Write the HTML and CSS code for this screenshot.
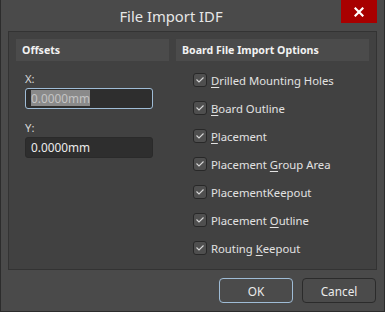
FILE: index.html
```html
<!DOCTYPE html>
<html lang="en">
<head>
  <meta charset="UTF-8">
  <title>File Import IDF</title>
  <link rel="stylesheet" href="styles.css">
</head>
<body>
  <div class="dialog">
    <div class="title-bar">
      <div class="title">File Import IDF</div>
      <button class="close-btn">
        <svg width="10" height="10" viewBox="0 0 10 10"><path d="M1.5 1.5 L8.5 8.5 M8.5 1.5 L1.5 8.5" stroke="#fff" stroke-width="2.2" stroke-linecap="square"/></svg>
      </button>
    </div>

    <div class="panel">
      <div class="group offsets">
        <div class="group-head">Offsets</div>
        <label class="field-label">X:</label>
        <div class="field focus"><span class="sel">0.0000mm</span></div>
        <label class="field-label">Y:</label>
        <div class="field">0.0000mm</div>
      </div>

      <div class="group options">
        <div class="group-head">Board File Import Options</div>
        <ul class="check-list" id="check-list"></ul>
      </div>
    </div>

    <div class="btn-row">
      <button class="btn primary">OK</button>
      <button class="btn">Cancel</button>
    </div>
  </div>

  <script>
    // 옵션 목록 (밑줄 글자 = 단축키)
    const options = [
      ["", "D", "rilled Mounting Holes"],
      ["", "B", "oard Outline"],
      ["", "P", "lacement"],
      ["Placement ", "G", "roup Area"],
      ["PlacementKeepout", "", ""],
      ["Placement ", "O", "utline"],
      ["Routing ", "K", "eepout"]
    ];
    const tick = '<svg width="14" height="14" viewBox="0 0 14 14"><path d="M3.5 6.5 L6 9 L10.5 4.5" fill="none" stroke="#d8d8d8" stroke-width="1.1"/></svg>';
    const list = document.getElementById('check-list');
    options.forEach(([pre, key, post]) => {
      const li = document.createElement('li');
      li.className = 'check-item';
      li.innerHTML = '<span class="box">' + tick + '</span><span class="check-text">' +
        pre + (key ? '<u>' + key + '</u>' : '') + post + '</span>';
      list.appendChild(li);
    });
  </script>
</body>
</html>
```

FILE: styles.css
```css
html, body {
  margin: 0; padding: 0;
  background: #4a4a4a;
  font-family: 'Noto Sans', 'Open Sans', sans-serif;
  overflow: hidden;
}
.dialog {
  width: 385px; height: 312px;
  box-sizing: border-box;
  background: #4a4a4a;
  border: 1px solid #2c2c2c;
  border-top: none;
  display: flex;
  flex-direction: column;
}
.title-bar {
  height: 31px;
  display: flex;
  align-items: flex-start;
}
.title {
  flex: 1;
  text-align: center;
  color: #e6e6e6;
  font-size: 14.8px;
  line-height: 32px;
}
.close-btn {
  width: 36px; height: 23px;
  margin-right: 7px;
  border: none;
  background: #a80000;
  padding: 0;
  display: flex;
  align-items: center;
  justify-content: center;
}
.panel {
  margin: 0 7px;
  height: 239px;
  box-sizing: border-box;
  border: 1px solid #333;
  background: #414141;
  padding: 7px 7px 0 7px;
  display: flex;
  gap: 7px;
}
.group-head {
  height: 22px;
  line-height: 22px;
  background: #4b4b4b;
  color: #f2f2f2;
  font-weight: bold;
  font-size: 10.6px;
  padding-left: 6px;
}
.offsets { width: 153px; }
.options { flex: 1; }
.field-label {
  display: block;
  color: #d6d6d6;
  font-size: 11.3px;
  margin: 10px 0 0 9px;
  line-height: 15px;
}
.field {
  margin: 2px 0 0 9px;
  width: 128px; height: 21px;
  box-sizing: border-box;
  background: #2e2e2e;
  border: 1px solid #2a2a2a;
  border-radius: 3px;
  color: #ececec;
  font-size: 11.8px;
  line-height: 19px;
  padding-left: 5px;
}
.field.focus {
  border-color: #9fbcd6;
  margin-bottom: 11px;
}
.sel {
  background: #8a8a8a;
  color: #c4c4c4;
}
.check-list {
  list-style: none;
  margin: 5px 0 0 0;
  padding: 0 0 0 17px;
}
.check-item {
  height: 28px;
  display: flex;
  align-items: center;
  gap: 4px;
}
.box {
  width: 14px; height: 14px;
  box-sizing: border-box;
  border: 1px solid #282828;
  border-radius: 3px;
  background: #4f4f4f;
  display: flex;
  align-items: center;
  justify-content: center;
}
.box svg { margin: -1px; }
.check-text {
  color: #e2e2e2;
  font-size: 11.3px;
}
.check-text u { text-underline-offset: 2px; }
.btn-row {
  display: flex;
  justify-content: flex-end;
  gap: 9px;
  margin: 8px 8px 0 0;
}
.btn {
  width: 74px; height: 25px;
  border: 1px solid #2b2b2b;
  border-radius: 4px;
  background: #4b4b4b;
  color: #ececec;
  font-family: inherit;
  font-size: 11.8px;
}
.btn.primary { border-color: #9fbcd6; }
```
